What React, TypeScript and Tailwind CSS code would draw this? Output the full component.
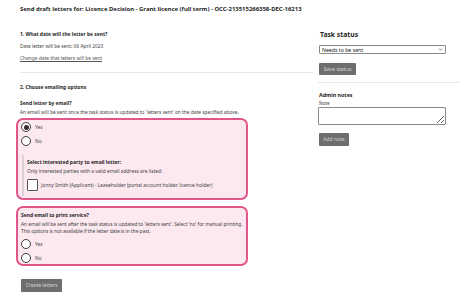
import { ChevronDown } from "lucide-react";

function Radio({ checked, label }: { checked?: boolean; label: string }) {
  return (
    <div className="flex items-center h-[10px]">
      <div className="w-[10px] h-[10px] rounded-full border border-[#3d3d3d] bg-white flex items-center justify-center shrink-0">
        {checked && <div className="w-[5px] h-[5px] rounded-full bg-[#3a2a32]" />}
      </div>
      <span className="ml-[4px] leading-[6px] text-[#444]">{label}</span>
    </div>
  );
}

export default function App() {
  return (
    <div className="w-[473px] h-[300px] bg-white font-['Noto_Sans',sans-serif] text-[4.85px] leading-[6px] text-[#444] overflow-hidden">
      <div className="pt-[5px] pl-[20px]">
        <h1 className="text-[5.95px] leading-[8px] font-bold text-[#1f1f1f]">
          Send draft letters for: Licence Decision - Grant licence (full term) - OCC-213515266358-DEC-16213
        </h1>
      </div>

      <div className="flex pl-[20px]">
        {/* main column */}
        <div className="w-[293px]">
          <h2 className="mt-[18px] text-[4.95px] leading-[6px] font-bold text-[#1f1f1f]">
            1. What date will the letter be sent?
          </h2>
          <p className="mt-[6px]">Date letter will be sent: 06 April 2023</p>
          <a className="block mt-[6px] underline text-[#555]">Change date that letters will be sent</a>
          <hr className="mt-[11px] border-t border-[#e6e6e6]" />

          <h2 className="mt-[11px] text-[4.95px] font-bold text-[#1f1f1f]">2. Choose emailing options</h2>
          <h3 className="mt-[10px] text-[4.95px] font-bold text-[#1f1f1f]">Send letter by email?</h3>
          <p className="mt-[3px]">
            An email will be sent once the task status is updated to 'letters sent' on the date specified above.
          </p>

          <div className="mt-[3px] ml-[-4px] w-[232px] rounded-[7px] border-2 border-[#e2568c] bg-[#fce9f0] px-[3px] pt-[2px] pb-[2px]">
            <div className="flex flex-col gap-[4px]">
              <Radio checked label="Yes" />
              <Radio label="No" />
            </div>
            <div className="mt-[9px] ml-[1px] border-l-2 border-[#ddd0d6] pl-[3px] pt-[4px] pb-[5px]">
              <h4 className="text-[4.95px] font-bold text-[#1f1f1f]">Select interested party to email letter:</h4>
              <p className="mt-[3px]">Only interested parties with a valid email address are listed:</p>
              <div className="mt-[5px] flex items-center">
                <div className="w-[11px] h-[12px] border border-[#555] rounded-[1px] bg-white shrink-0" />
                <span className="ml-[3px]">
                  Jonny Smith (Applicant) - Leaseholder (portal account holder, licence holder)
                </span>
              </div>
            </div>
          </div>

          <div className="mt-[6px] ml-[-4px] w-[232px] rounded-[7px] border-2 border-[#e2568c] bg-[#fce9f0] pl-[3px] pr-0 pt-[4px] pb-[1px]">
            <h3 className="text-[4.95px] font-bold text-[#1f1f1f]">Send email to print service?</h3>
            <p className="mt-[3px] leading-[7px] tracking-[-0.04px]">
              An email will be sent after the task status is updated to 'letters sent'. Select 'no' for manual printing.
              <br />
              This options is not available if the letter date is in the past.
            </p>
            <div className="mt-[4px] flex flex-col gap-[4px]">
              <Radio label="Yes" />
              <Radio label="No" />
            </div>
          </div>

          <button className="block mt-[13px] ml-[1px] w-[41px] h-[13px] bg-[#6e6e6e] text-[#d2d2d2] text-[5px] leading-[13px] rounded-[1px]">
            Create letters
          </button>
        </div>

        {/* side column */}
        <div className="ml-[5px] w-[142px]">
          <h2 className="mt-[18px] ml-[2px] text-[6.8px] leading-[8px] font-bold text-[#1f1f1f]">Task status</h2>
          <div className="mt-[6px] ml-[1px] w-[127px] h-[9px] border border-[#8a8a8a] rounded-[1px] bg-white flex items-center justify-between pl-[2px] pr-[2px]">
            <span className="text-[5.2px] leading-[6px] text-[#222]">Needs to be sent</span>
            <ChevronDown className="w-[5px] h-[5px] text-[#333]" strokeWidth={3} />
          </div>
          <button className="block mt-[9px] ml-[1px] w-[37px] h-[12px] bg-[#6e6e6e] text-[#d2d2d2] text-[5.3px] leading-[12px] rounded-[1px]">
            Save status
          </button>
          <hr className="mt-[7px] border-t border-[#e6e6e6]" />

          <h3 className="mt-[9px] ml-[1px] text-[5.3px] font-bold text-[#1f1f1f]">Admin notes</h3>
          <label className="block mt-[2px] ml-[1px] text-[4.6px]">Note</label>
          <textarea className="block mt-[1px] w-[128px] h-[18px] border border-[#8a8a8a] rounded-[1px] bg-white resize" />
          <button className="block mt-[8px] ml-[1px] w-[30px] h-[13px] bg-[#6e6e6e] text-[#d2d2d2] text-[5px] leading-[13px] rounded-[1px]">
            Add note
          </button>
        </div>
      </div>
    </div>
  );
}
